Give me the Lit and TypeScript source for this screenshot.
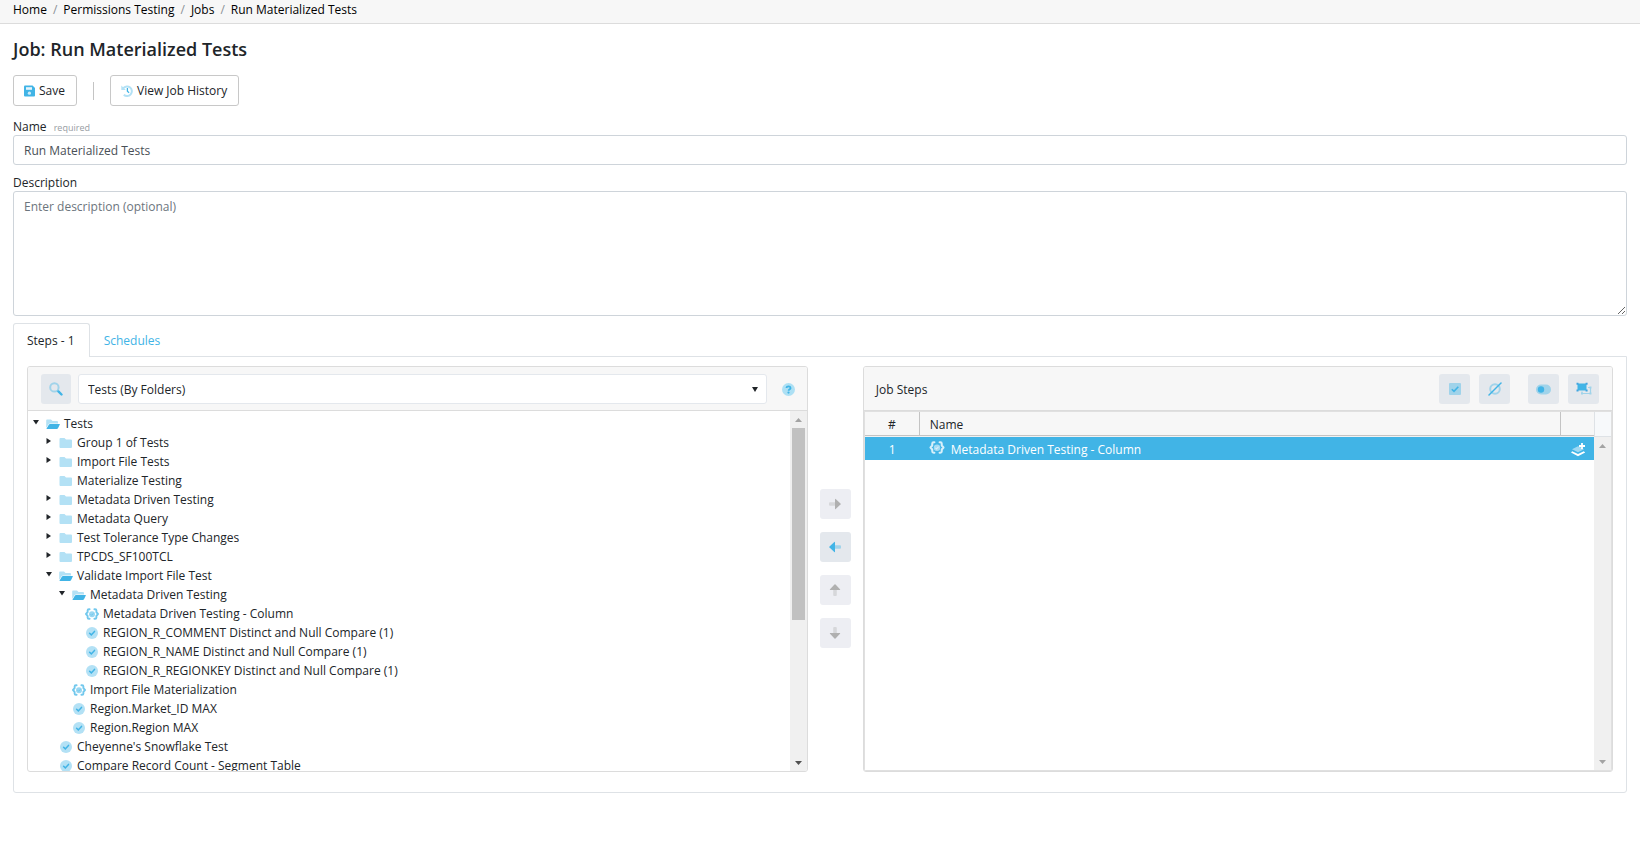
import { LitElement, html, svg, css, nothing } from "lit";
import { customElement, property, state } from "lit/decorators.js";
import { classMap } from "lit/directives/class-map.js";
import { styleMap } from "lit/directives/style-map.js";

const icon = (width: number, height: number, viewBox: string, body: unknown) => html`
  <svg width=${width} height=${height} viewBox=${viewBox} aria-hidden="true">${body}</svg>
`;

const saveIcon = () => icon(11, 12, "0 0 11 12", svg`
  <path fill="#41b4e6" fill-rule="evenodd" d="M1 .5h7.6L11 3v7.6q0 .9-.9.9H1q-1 0-1-.9V1.4Q0 .5 1 .5z"/>
  <path fill="#e6f5fc" d="M2 2.2h6v2.6H2z"/>
  <circle cx="5.4" cy="8.2" r="1.6" fill="#cfecf9"/>`);

const historyIcon = () => icon(12, 12, "0 0 12 12", svg`
  <path fill="none" stroke="#b3e1f5" stroke-width="2" d="M2.3 3.2A4.800 4.800 0 1 1 2.8 9.7"/>
  <path fill="#b3e1f5" d="M.3.6v4.5h4.5z"/>
  <path fill="none" stroke="#41b4e6" stroke-width="1.3" d="M6.4 3v3.3l1.7 1.4"/>`);

const searchIcon = () => icon(14, 14, "0 0 14 14", svg`
  <circle cx="5.4" cy="5.4" r="4.2" fill="none" stroke="#a0d3ea" stroke-width="2"/>
  <path stroke="#41b4e6" stroke-width="2.4" stroke-linecap="round" d="M9.4 9.4l3.1 3.1"/>`);

const helpIcon = () => icon(13, 13, "0 0 13 13", svg`
  <circle cx="6.5" cy="6.5" r="6.5" fill="#ade0f4"/>
  <path fill="none" stroke="#41b4e6" stroke-width="1.8" d="M4.4 5q.2-1.6 2.1-1.6T8.6 5q0 .9-1 1.4t-1 1.3"/>
  <circle cx="6.5" cy="9.6" r="1.1" fill="#41b4e6"/>`);

const closedFolder = () => icon(14, 12, "0 0 14 12", svg`
  <path fill="#b3e1f5" d="M1.5 1h4l1.500 1.500h5q1 0 1 1v6.500q0 1-1 1H1.500q-1 0-1-1V2q0-1 1-1z"/>`);

const openFolder = () => icon(14, 12, "0 0 14 12", svg`
  <path fill="#b3e1f5" d="M1 1.5h4L6.500 3h4.500q1 0 1 1v1.500H4q-1 0-1.500.8L.2 10V2.500q0-1 .8-1z"/>
  <path fill="#41b4e6" d="M4 6h9.500q.6 0 .3.600L12 10.300q-.4.700-1.200.700H.9q-.6 0-.3-.6L2.800 6.700Q3.200 6 4 6z"/>`);

const checkCircle = () => icon(12, 12, "0 0 12 12", svg`
  <circle cx="6" cy="6" r="6" fill="#b3e1f5"/>
  <path fill="none" stroke="#41b4e6" stroke-width="1.500" stroke-linecap="round" d="M3.600 6.200l1.700 1.700 3.200-3.500"/>`);

const braces = (line: string, disc: string) => svg`
  <path fill="none" stroke=${line} stroke-width="1.900" stroke-linecap="round" stroke-linejoin="round"
    d="M4.600 1.200H3.900q-1.300 0-1.300 1.300v1.700L1 6l1.600 1.800v1.700q0 1.300 1.300 1.300h.7M9.400 1.200h.7q1.300 0 1.300 1.300v1.700L13 6l-1.600 1.800v1.700q0 1.300-1.300 1.300h-.7"/>
  <circle cx="7" cy="6.200" r="3" fill=${disc}/>
  <path fill="none" stroke=${line} stroke-width="1" d="M5.600 6.300l1 1 1.800-2"/>`;

const bracesIcon = () => icon(14, 12, "0 0 14 12", braces("#72c8ed", "#98d7f2"));
const bracesLight = () => icon(16, 13, "0 0 14 12", braces("#d9f0fa", "#a6dcf4"));

const checkSquare = () => icon(12, 12, "0 0 12 12", svg`
  <rect width="12" height="12" rx="1" fill="#a0d3ea"/>
  <path fill="none" stroke="#41b4e6" stroke-width="1.600" d="M2.800 6.200L5 8.400l4.300-4.600"/>`);

const emptySet = () => icon(14, 14, "0 0 14 14", svg`
  <circle cx="7" cy="7" r="4.800" fill="none" stroke="#a0d3ea" stroke-width="2"/>
  <path stroke="#41b4e6" stroke-width="1.500" stroke-linecap="round" d="M1 13L13 1"/>`);

const toggleIcon = () => icon(15, 11, "0 0 15 11", svg`
  <rect y=".5" width="15" height="10" rx="5" fill="#a0d3ea"/>
  <circle cx="5" cy="5.500" r="3.200" fill="#41b4e6"/>`);

const groupIcon = () => icon(16, 14, "0 0 16 14", svg`
  <path fill="none" stroke="#a0d3ea" stroke-width="1.200" d="M12 5.500h2.500v6H6V9.500"/>
  <path fill="#a0d3ea" d="M13.400 4.400h2v2h-2zM13.400 10.600h2v2h-2zM5 10.600h2v2H5z"/>
  <path fill="#41b4e6" d="M1.500 1.500h9v7h-9z"/>
  <path fill="#41a4e0" d="M.5.700h2v2h-2zM9.600.700h2v2h-2zM.5 7.500h2v2h-2zM9.600 7.500h2v2h-2z"/>`);

const layersPlus = () => icon(15, 15, "0 0 15 15", svg`
  <path fill="#a0d9f3" d="M7 4.200l3 1.300 3 1.700-6 3-6-3z"/>
  <path fill="#fff" d="M1.200 9.200L7 11.900l5.800-2.700 1.400 1.300L7 14.300-.1 10.500z"/>
  <path stroke="#fff" stroke-width="1.800" d="M11 1v6M8 4h6"/>`);

const ANGLES: Record<string, number> = { right: 0, down: 90, left: 180, up: 270 };
const arrowIcon = (dir: string, head: string, tail: string) => icon(12, 12, "0 0 12 12", svg`
  <g transform="rotate(${ANGLES[dir]} 6 6)">
    <path fill=${tail} d="M1 4.200h5.500v3.600H1q-1 0-1-1V5.200q0-1 1-1z"/>
    <path fill=${head} d="M6 1.200q0-.8.700-.2l4.800 4.500q.5.500 0 1l-4.800 4.500q-.7.600-.7-.2z"/>
  </g>`);

type Kind = "open" | "closed" | "leaf" | "check" | "braces";
interface Node { level: number; kind: Kind; label: string; }

const NODES: Node[] = [
  { level: 0, kind: "open", label: "Tests" },
  { level: 1, kind: "closed", label: "Group 1 of Tests" },
  { level: 1, kind: "closed", label: "Import File Tests" },
  { level: 1, kind: "leaf", label: "Materialize Testing" },
  { level: 1, kind: "closed", label: "Metadata Driven Testing" },
  { level: 1, kind: "closed", label: "Metadata Query" },
  { level: 1, kind: "closed", label: "Test Tolerance Type Changes" },
  { level: 1, kind: "closed", label: "TPCDS_SF100TCL" },
  { level: 1, kind: "open", label: "Validate Import File Test" },
  { level: 2, kind: "open", label: "Metadata Driven Testing" },
  { level: 3, kind: "braces", label: "Metadata Driven Testing - Column" },
  { level: 3, kind: "check", label: "REGION_R_COMMENT Distinct and Null Compare (1)" },
  { level: 3, kind: "check", label: "REGION_R_NAME Distinct and Null Compare (1)" },
  { level: 3, kind: "check", label: "REGION_R_REGIONKEY Distinct and Null Compare (1)" },
  { level: 2, kind: "braces", label: "Import File Materialization" },
  { level: 2, kind: "check", label: "Region.Market_ID MAX" },
  { level: 2, kind: "check", label: "Region.Region MAX" },
  { level: 1, kind: "check", label: "Cheyenne's Snowflake Test" },
  { level: 1, kind: "check", label: "Compare Record Count - Segment Table" },
];

const NODE_ICONS: Record<Kind, () => unknown> = {
  open: openFolder, closed: closedFolder, leaf: closedFolder, check: checkCircle, braces: bracesIcon,
};

@customElement("scroll-track")
class ScrollTrack extends LitElement {
  @property({ type: Number }) thumb = 0;
  @property() up = "#a3a3a3";
  @property() down = "#a3a3a3";

  static styles = css`
    :host { display: flex; flex-direction: column; width: 17px; background: #f0f0f0; }
    .end { display: flex; align-items: center; justify-content: center; height: 17px; flex: none; }
    .run { flex: 1; min-height: 0; padding: 0 2px; }
    .thumb { background: #c1c1c1; }
    svg { display: block; }
  `;

  render() {
    return html`
      <div class="end">${icon(7, 4, "0 0 7 4", svg`<path fill=${this.up} d="M0 4L3.500 0 7 4z"/>`)}</div>
      <div class="run">
        ${this.thumb ? html`<div class="thumb" style=${styleMap({ height: `${this.thumb}%` })}></div>` : nothing}
      </div>
      <div class="end">${icon(7, 4, "0 0 7 4", svg`<path fill=${this.down} d="M0 0h7L3.500 4z"/>`)}</div>
    `;
  }
}

@customElement("test-tree")
class TestTree extends LitElement {
  static styles = css`
    :host { display: flex; height: 360px; overflow: hidden; }
    ul { flex: 1; min-width: 0; margin: 0; padding: 3px 0 0; list-style: none; overflow: hidden; }
    li { display: flex; align-items: center; height: 19px; line-height: 19px; white-space: nowrap; }
    .caret { flex: none; width: 7px; height: 12px; margin-right: 6px; }
    .glyph { flex: none; display: flex; justify-content: center; width: 14px; margin-right: 4px; }
    svg { display: block; }
  `;

  private caret(kind: Kind) {
    if (kind === "open") return svg`<path fill="#212529" d="M0 2h6L3 6.500z"/>`;
    if (kind === "closed") return svg`<path fill="#212529" d="M.5 1v6l4.500-3z"/>`;
    return nothing;
  }

  render() {
    return html`
      <ul role="tree" aria-label="Tests">
        ${NODES.map((n) => html`
          <li role="treeitem" aria-level=${n.level + 1} style=${styleMap({ paddingLeft: `${5 + n.level * 13}px` })}>
            <span class="caret">${icon(7, 12, "0 0 7 12", this.caret(n.kind))}</span>
            <span class="glyph">${NODE_ICONS[n.kind]()}</span>
            <span>${n.label}</span>
          </li>`)}
      </ul>
      <scroll-track thumb="59" down="#505050"></scroll-track>
    `;
  }
}

@customElement("job-steps")
class JobSteps extends LitElement {
  static styles = css`
    :host { display: flex; box-sizing: border-box; height: 360px; border: 1px solid #e0e0e0; }
    .main { flex: 1; min-width: 0; }
    table { width: 100%; border-collapse: separate; border-spacing: 0; table-layout: fixed; }
    th { height: 21px; padding: 2px 0 0; font-weight: 400; text-align: left; background: #f7f7f7;
      border-bottom: 1px solid #c4c4c4; border-right: 1px solid #c4c4c4; }
    th:last-child { border-right: 0; }
    .num { width: 54px; text-align: center; }
    .name { padding-left: 10px; }
    .act { width: 33px; }
    td { height: 21px; padding: 2px 0 0; background: #41b4e6; color: #fff; border-top: 1px solid #f2f2f2; }
    td.name { padding-left: 9px; }
    .cell { display: flex; align-items: center; gap: 6px; }
    .cell svg { margin-bottom: 4px; }
    .side { display: flex; flex-direction: column; }
    .corner { height: 24px; background: #f7f9fb; border-left: 1px solid #dee2e6; border-bottom: 1px solid #dee2e6; }
    scroll-track { flex: 1; }
    svg { display: block; }
    .act svg { margin-left: 10px; }
  `;

  render() {
    return html`
      <div class="main">
        <table>
          <thead>
            <tr><th class="num">#</th><th class="name">Name</th><th class="act" aria-label="Action"></th></tr>
          </thead>
          <tbody>
            <tr>
              <td class="num">1</td>
              <td class="name"><div class="cell">${bracesLight()}<span>Metadata Driven Testing - Column</span></div></td>
              <td class="act">${layersPlus()}</td>
            </tr>
          </tbody>
        </table>
      </div>
      <div class="side"><div class="corner"></div><scroll-track></scroll-track></div>
    `;
  }
}

@customElement("app-root")
class AppRoot extends LitElement {
  @state() private tab = 0;

  static styles = css`
    :host { display: block; font-family: "Open Sans", "Noto Sans", sans-serif; font-size: 12px;
      line-height: 16px; color: #212529; background: #fff; }
    *, *::before, *::after { box-sizing: border-box; }
    button, input, textarea, select { font: inherit; color: inherit; margin: 0; }
    svg { display: block; flex: none; }
    .crumbs { height: 24px; padding: 2px 13px 0; background: #f7f7f7; border-bottom: 1px solid #dcdcdc; }
    .crumbs ol { display: flex; gap: 6px; margin: 0; padding: 0; list-style: none; }
    .crumbs li { display: flex; gap: 6px; }
    .crumbs li + li::before { content: "/"; color: #8a9096; }
    .crumbs a { color: #000; text-decoration: none; }
    main { padding: 13px; }
    h1 { margin: 0; font-size: 18px; line-height: 24px; font-weight: 600; }
    .bar { display: flex; align-items: center; margin: 14px 0 13px; }
    .btn { display: flex; align-items: center; gap: 4px; height: 31px; padding: 1px 11px 0 10px; background: #fff;
      border: 1px solid #c8c8c8; border-radius: 3px; }
    .rule { width: 1px; height: 18px; margin: 0 16px; background: #c4c4c4; }
    label { display: block; height: 16px; }
    .req { margin-left: 4px; font-size: 9px; color: #979da3; }
    .field { display: block; width: 100%; padding: 1px 10px 0; border: 1px solid #ced4da; border-radius: 3px;
      color: #495057; background: #fff; outline: none; }
    input.field { height: 30px; margin-bottom: 10px; }
    textarea.field { height: 125px; padding: 7px 10px; resize: vertical; }
    textarea::placeholder { color: #6c757d; }
    .tabs { display: flex; margin-top: 7px; }
    .tab { height: 34px; padding: 0 14px 0 13px; background: none; border: 1px solid transparent; border-bottom: 0;
      border-radius: 3px 3px 0 0; color: #41b4e6; }
    .tab.on { position: relative; background: #fff; border-color: #dee2e6; color: #212529; }
    .panel { display: grid; grid-template-columns: minmax(0, 51fr) 55px minmax(0, 49fr); margin-top: -1px;
      padding: 9px 13px 20px; border: 1px solid #dee2e6; border-radius: 0 0 3px 3px; }
    .card { border: 1px solid #dcdcdc; border-radius: 3px; overflow: hidden; }
    .head { display: flex; align-items: center; height: 44px; padding: 7px 13px 6px; background: #f7f7f7;
      border-bottom: 1px solid #dcdcdc; }
    .sq { display: flex; align-items: center; justify-content: center; flex: none; width: 31px; height: 30px;
      padding: 0; border: 0; border-radius: 3px; background: #e4e8ed; }
    .sq:disabled { background: #edeef3; }
    .left .sq { width: 30px; }
    .pick { display: grid; flex: 1; align-items: center; margin: 0 15px 0 7px; }
    .pick > * { grid-area: 1 / 1; }
    .pick svg { justify-self: end; margin-right: 9px; pointer-events: none; }
    select { appearance: none; width: 100%; height: 30px; padding: 1px 9px 0; border: 1px solid #e4e8ed;
      border-radius: 3px; background: #fff; }
    .help { display: flex; padding: 0; border: 0; background: none; }
    .moves { display: flex; flex-direction: column; align-items: center; gap: 13px; padding-top: 123px; }
    .head h2 { flex: 1; margin: 0; padding-top: 1px; font-size: 12px; font-weight: 400; }
    .tools { display: flex; gap: 9px; }
    .tools .gap { margin-left: 9px; }
    .left .head { padding-right: 12px; }
    .right .head { padding-left: 12px; }
  `;

  private move(dir: string, label: string, live = false) {
    return html`<button class="sq" aria-label=${label} ?disabled=${!live}>
      ${live ? arrowIcon(dir, "#41b4e6", "#a0d3ea") : arrowIcon(dir, "#b0b0b0", "#d6d7da")}
    </button>`;
  }

  render() {
    return html`
      <nav class="crumbs" aria-label="Breadcrumb">
        <ol>
          ${["Home", "Permissions Testing", "Jobs", "Run Materialized Tests"].map(
            (c) => html`<li><a href="#">${c}</a></li>`)}
        </ol>
      </nav>
      <main>
        <h1>Job: Run Materialized Tests</h1>
        <div class="bar">
          <button class="btn">${saveIcon()}Save</button>
          <span class="rule"></span>
          <button class="btn">${historyIcon()}View Job History</button>
        </div>
        <label for="name">Name <span class="req">required</span></label>
        <input id="name" class="field" type="text" .value=${"Run Materialized Tests"} />
        <label for="desc">Description</label>
        <textarea id="desc" class="field" placeholder="Enter description (optional)"></textarea>
        <div class="tabs" role="tablist">
          ${["Steps - 1", "Schedules"].map((t, i) => html`
            <button role="tab" class=${classMap({ tab: true, on: this.tab === i })}
              aria-selected=${this.tab === i ? "true" : "false"} @click=${() => (this.tab = i)}>${t}</button>`)}
        </div>
        <div class="panel">
          <section class="card left">
            <div class="head">
              <button class="sq" aria-label="Search">${searchIcon()}</button>
              <div class="pick">
                <select aria-label="Source"><option>Tests (By Folders)</option></select>
                ${icon(6, 5, "0 0 6 5", svg`<path fill="#212529" d="M0 0h6L3 5z"/>`)}
              </div>
              <button class="help" aria-label="Help">${helpIcon()}</button>
            </div>
            <test-tree></test-tree>
          </section>
          <div class="moves">
            ${this.move("right", "Add step")}
            ${this.move("left", "Remove step", true)}
            ${this.move("up", "Move up")}
            ${this.move("down", "Move down")}
          </div>
          <section class="card right">
            <div class="head">
              <h2>Job Steps</h2>
              <div class="tools">
                <button class="sq" aria-label="Enable step">${checkSquare()}</button>
                <button class="sq" aria-label="Disable step">${emptySet()}</button>
                <button class="sq gap" aria-label="Toggle">${toggleIcon()}</button>
                <button class="sq" aria-label="Group">${groupIcon()}</button>
              </div>
            </div>
            <job-steps></job-steps>
          </section>
        </div>
      </main>
    `;
  }
}
